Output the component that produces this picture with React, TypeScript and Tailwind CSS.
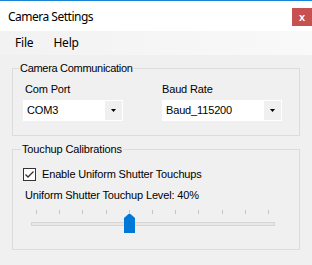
import React from "react";

const ticks = Array.from({ length: 11 }, (_, i) => i);

function Combo({ value, width }: { value: string; width: string }) {
  return (
    <div className={`${width} h-[21px] bg-white flex items-center`}>
      <span className="flex-1 pl-[4px] text-[11px] leading-[13px] text-black">{value}</span>
      <div className="w-[17px] h-[19px] mr-[1px] bg-[#f0f0f0] flex items-center justify-center">
        <svg width="5" height="3" viewBox="0 0 5 3">
          <path d="M0 0 H5 L2.5 3 Z" fill="#000" />
        </svg>
      </div>
    </div>
  );
}

export default function App() {
  return (
    <div
      className="w-[312px] h-[265px] bg-[#f0f0f0] flex flex-col overflow-hidden tracking-[-0.15px]"
      style={{ fontFamily: '"Liberation Sans", Arial, sans-serif' }}
    >
      {/* Title bar */}
      <div className="h-[31px] bg-white border-t border-[#1883d7] flex justify-between">
        <div
          className="pl-[8px] pt-[8px] text-[12px] leading-[16px] text-black tracking-[-0.5px]"
          style={{ fontFamily: '"Noto Sans", sans-serif' }}
        >
          Camera Settings
        </div>
        <div className="mt-[7px] w-[20px] h-[18px] bg-[#c75050] flex items-center justify-center text-white text-[11px] font-bold leading-none tracking-normal">
          x
        </div>
      </div>
      {/* Menu bar */}
      <div
        className="h-[24px] bg-gradient-to-r from-[#f2f2f2] to-[#f9f9f9] flex items-center text-[12px] text-black tracking-[-0.2px]"
        style={{ fontFamily: '"Noto Sans", sans-serif' }}
      >
        <span className="ml-[15px]">File</span>
        <span className="ml-[20px]">Help</span>
      </div>

      {/* Group 1 */}
      <fieldset className="mx-[12px] mt-[7px] h-[74px] border border-[#dcdcdc]">
        <legend className="ml-[6px] px-[1px] text-[11px] leading-[13px] text-black tracking-[-0.3px]">
          Camera Communication
        </legend>
        <div className="flex mt-[8px] pl-[10px]">
          <div className="w-[139px] flex flex-col gap-[4px]">
            <span className="pl-[2px] text-[11px] leading-[13px]">Com Port</span>
            <Combo value="COM3" width="w-[100px]" />
          </div>
          <div className="flex flex-col gap-[4px]">
            <span className="text-[11px] leading-[13px]">Baud Rate</span>
            <Combo value="Baud_115200" width="w-[120px]" />
          </div>
        </div>
      </fieldset>

      {/* Group 2 */}
      <fieldset className="mx-[12px] mt-[7px] h-[107px] border border-[#dcdcdc]">
        <legend className="ml-[8px] px-[1px] text-[11px] leading-[13px] text-black">
          Touchup Calibrations
        </legend>
        <div className="flex items-center mt-[12px] pl-[10px]">
          <div className="w-[13px] h-[13px] border border-[#333333] bg-white flex items-center justify-center">
            <svg width="11" height="11" viewBox="0 0 11 11">
              <path d="M1.5 5.5 L4 8 L9.5 2.5" stroke="#333" strokeWidth="1.3" fill="none" />
            </svg>
          </div>
          <span className="ml-[6px] text-[11px] leading-[13px]">Enable Uniform Shutter Touchups</span>
        </div>
        <div className="mt-[8px] pl-[12px] text-[11px] leading-[13px]">Uniform Shutter Touchup Level: 40%</div>
        <div className="relative mt-[8px] ml-[18px] w-[244px] h-[24px]">
          <div className="ml-[5px] w-[233px] flex justify-between">
            {ticks.map((t) => (
              <div key={t} className="w-[1px] h-[4px] bg-[#c4c4c4]" />
            ))}
          </div>
          <div className="mt-[8px] h-[4px] w-[244px] bg-[#e7e7e7] border border-[#d6d6d6]" />
          <svg className="absolute left-[93px] top-[4px]" width="11" height="19" viewBox="0 0 11 19">
            <path d="M0 4 L4.5 0 H6.5 L11 4 V19 H0 Z" fill="#0078d7" />
          </svg>
        </div>
      </fieldset>
    </div>
  );
}
